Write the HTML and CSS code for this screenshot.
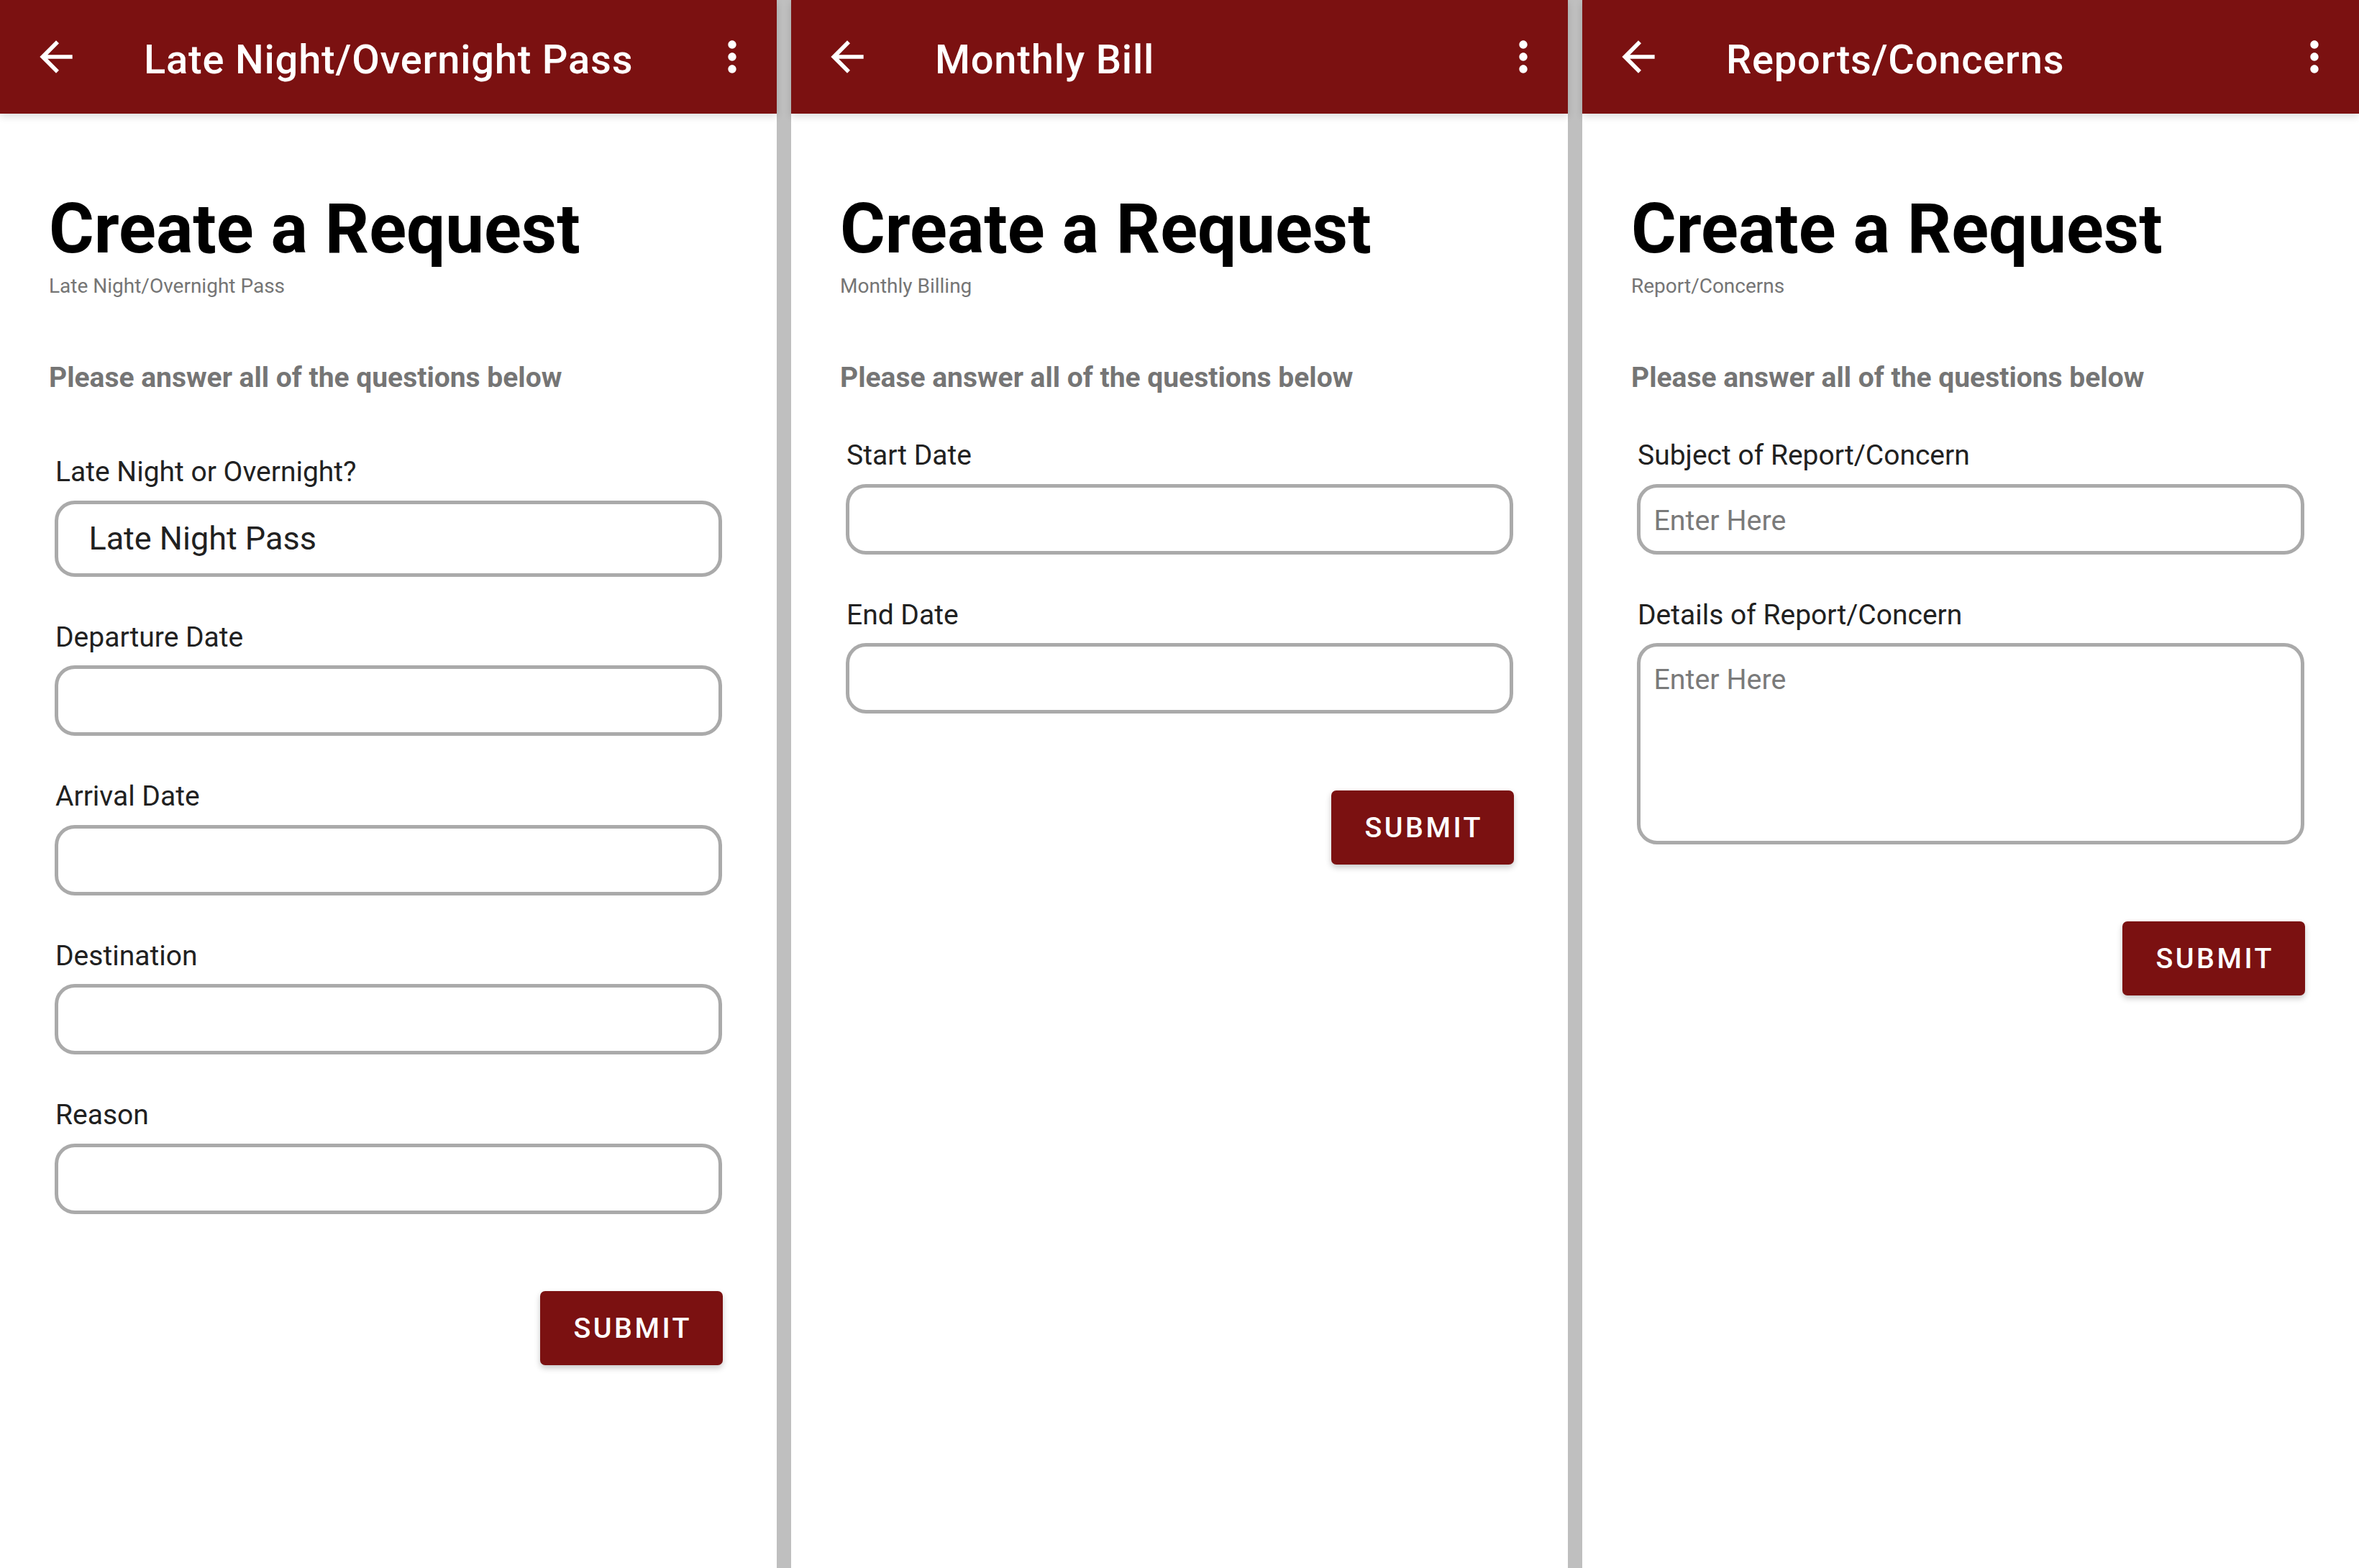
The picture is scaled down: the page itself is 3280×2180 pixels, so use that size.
FILE: index.html
```html
<!DOCTYPE html>
<html lang="en">
<head>
<meta charset="utf-8">
<title>Create a Request</title>
<link rel="stylesheet" href="styles.css">
</head>
<body>
<div class="screens">

  <section class="screen">
    <header class="appbar">
      <svg class="icon back" viewBox="0 0 24 24"><path d="M20 11H7.83l5.59-5.59L12 4l-8 8 8 8 1.41-1.41L7.83 13H20v-2z"/></svg>
      <span class="appbar-title">Late Night/Overnight Pass</span>
      <svg class="icon more" viewBox="0 0 24 24"><path d="M12 8c1.1 0 2-.9 2-2s-.9-2-2-2-2 .9-2 2 .9 2 2 2zm0 2c-1.1 0-2 .9-2 2s.9 2 2 2 2-.9 2-2-.9-2-2-2zm0 6c-1.1 0-2 .9-2 2s.9 2 2 2 2-.9 2-2-.9-2-2-2z"/></svg>
    </header>
    <main class="content">
      <h1 class="headline">Create a Request</h1>
      <p class="subtitle">Late Night/Overnight Pass</p>
      <p class="instructions">Please answer all of the questions below</p>
      <div class="form">
        <div class="field field-first-spinner">
          <div class="label">Late Night or Overnight?</div>
          <div class="box spinner"><span class="value">Late Night Pass</span></div>
        </div>
        <div class="field">
          <div class="label">Departure Date</div>
          <div class="box"></div>
        </div>
        <div class="field">
          <div class="label">Arrival Date</div>
          <div class="box"></div>
        </div>
        <div class="field">
          <div class="label">Destination</div>
          <div class="box"></div>
        </div>
        <div class="field">
          <div class="label">Reason</div>
          <div class="box"></div>
        </div>
        <div class="actions">
          <button class="submit">SUBMIT</button>
        </div>
      </div>
    </main>
  </section>

  <section class="screen">
    <header class="appbar">
      <svg class="icon back" viewBox="0 0 24 24"><path d="M20 11H7.83l5.59-5.59L12 4l-8 8 8 8 1.41-1.41L7.83 13H20v-2z"/></svg>
      <span class="appbar-title">Monthly Bill</span>
      <svg class="icon more" viewBox="0 0 24 24"><path d="M12 8c1.1 0 2-.9 2-2s-.9-2-2-2-2 .9-2 2 .9 2 2 2zm0 2c-1.1 0-2 .9-2 2s.9 2 2 2 2-.9 2-2-.9-2-2-2zm0 6c-1.1 0-2 .9-2 2s.9 2 2 2 2-.9 2-2-.9-2-2-2z"/></svg>
    </header>
    <main class="content">
      <h1 class="headline">Create a Request</h1>
      <p class="subtitle">Monthly Billing</p>
      <p class="instructions">Please answer all of the questions below</p>
      <div class="form">
        <div class="field">
          <div class="label">Start Date</div>
          <div class="box"></div>
        </div>
        <div class="field">
          <div class="label">End Date</div>
          <div class="box"></div>
        </div>
        <div class="actions">
          <button class="submit">SUBMIT</button>
        </div>
      </div>
    </main>
  </section>

  <section class="screen">
    <header class="appbar">
      <svg class="icon back" viewBox="0 0 24 24"><path d="M20 11H7.83l5.59-5.59L12 4l-8 8 8 8 1.41-1.41L7.83 13H20v-2z"/></svg>
      <span class="appbar-title">Reports/Concerns</span>
      <svg class="icon more" viewBox="0 0 24 24"><path d="M12 8c1.1 0 2-.9 2-2s-.9-2-2-2-2 .9-2 2 .9 2 2 2zm0 2c-1.1 0-2 .9-2 2s.9 2 2 2 2-.9 2-2-.9-2-2-2zm0 6c-1.1 0-2 .9-2 2s.9 2 2 2 2-.9 2-2-.9-2-2-2z"/></svg>
    </header>
    <main class="content">
      <h1 class="headline">Create a Request</h1>
      <p class="subtitle">Report/Concerns</p>
      <p class="instructions">Please answer all of the questions below</p>
      <div class="form">
        <div class="field">
          <div class="label">Subject of Report/Concern</div>
          <div class="box text-input"><span class="placeholder">Enter Here</span></div>
        </div>
        <div class="field">
          <div class="label">Details of Report/Concern</div>
          <div class="box textarea"><span class="placeholder">Enter Here</span></div>
        </div>
        <div class="actions">
          <button class="submit">SUBMIT</button>
        </div>
      </div>
    </main>
  </section>

</div>
</body>
</html>
```

FILE: styles.css
```css
* {
  box-sizing: border-box;
}

html, body {
  margin: 0;
  padding: 0;
  width: 3280px;
  height: 2180px;
  overflow: hidden;
  background: #bfbfbf;
  font-family: Roboto, "Noto Sans", "Liberation Sans", sans-serif;
}

.screens {
  display: flex;
  gap: 20px;
  width: 3280px;
  height: 2180px;
  background: #bfbfbf;
}

.screen {
  width: 1080px;
  height: 2180px;
  background: #ffffff;
  display: flex;
  flex-direction: column;
}

.appbar {
  height: 158px;
  flex: 0 0 158px;
  background: #7b1111;
  display: flex;
  align-items: center;
  box-shadow: 0 4px 10px rgba(0, 0, 0, 0.14);
  position: relative;
  z-index: 1;
}

.icon {
  width: 68px;
  height: 68px;
  fill: #ffffff;
  flex: 0 0 68px;
}

.back {
  margin-left: 44px;
}

.appbar-title {
  margin-left: 88px;
  padding-top: 8px;
  color: #ffffff;
  font-size: 56px;
  font-weight: 500;
  letter-spacing: 0.8px;
  line-height: 66px;
  flex: 1 1 auto;
  white-space: nowrap;
}

.more {
  margin-right: 28px;
}

.content {
  padding: 100px 68px 0 68px;
}

.headline {
  margin: 0;
  font-size: 96px;
  line-height: 120px;
  font-weight: 700;
  color: #000000;
  letter-spacing: 0;
}

.subtitle {
  margin: 3px 0 0 0;
  font-size: 28px;
  line-height: 34px;
  color: #757575;
}

.instructions {
  margin: 88px 0 0 0;
  font-size: 39px;
  line-height: 44px;
  font-weight: 700;
  color: #757575;
}

.form {
  padding: 0 8px;
}

.field {
  margin-top: 61px;
}

.field:first-child {
  margin-top: 63px;
}

.field.field-first-spinner {
  margin-top: 86px;
}

.label {
  font-size: 39px;
  line-height: 46px;
  color: #212121;
  padding-left: 1px;
}

.box {
  margin-top: 16.5px;
  height: 98px;
  border: 5.6px solid #aaaaaa;
  border-radius: 28px;
  background: #ffffff;
  display: flex;
  align-items: center;
}

.spinner {
  height: 106px;
  padding-left: 42.4px;
}

.spinner .value {
  font-size: 45px;
  color: #212121;
}

.text-input {
  padding: 4px 0 0 18.4px;
}

.textarea {
  height: 280px;
  align-items: flex-start;
  padding: 23px 0 0 18.4px;
}

.placeholder {
  font-size: 39.4px;
  line-height: 46px;
  color: #7a7a7a;
}

.actions {
  display: flex;
  justify-content: flex-end;
  margin-top: 107px;
}

.submit {
  width: 254px;
  height: 103px;
  background: #7b1111;
  color: #ffffff;
  border: none;
  border-radius: 7px;
  font-family: Roboto, "Noto Sans", "Liberation Sans", sans-serif;
  font-size: 39.4px;
  font-weight: 500;
  letter-spacing: 3.5px;
  padding: 0 0 0 3.5px;
  box-shadow: 0 4px 8px rgba(0, 0, 0, 0.22);
  margin-right: -1px;
}
```
